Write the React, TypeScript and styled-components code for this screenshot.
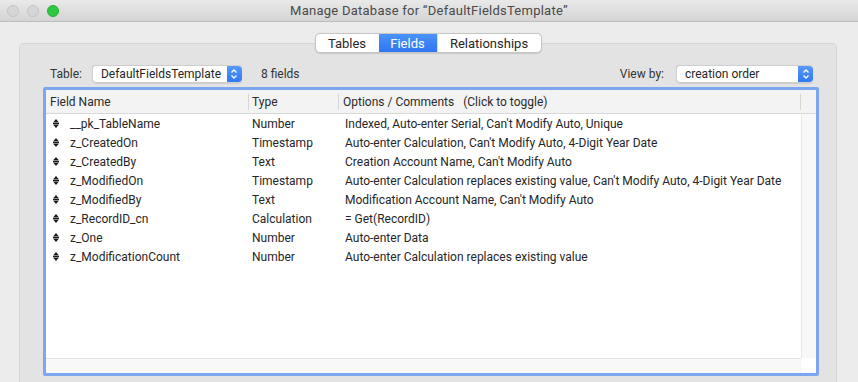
import React from "react";
import styled, { createGlobalStyle } from "styled-components";

const Global = createGlobalStyle`
  html, body { margin: 0; padding: 0; }
  body { background: #ececec; font-family: Roboto, "Liberation Sans", sans-serif; -webkit-font-smoothing: antialiased; }
  * { box-sizing: border-box; }
`;

const Window = styled.div`
  width: 858px;
  height: 382px;
  background: #ececec;
  display: flex;
  flex-direction: column;
  overflow: hidden;
`;

const TitleBar = styled.div`
  height: 22px;
  flex: none;
  background: linear-gradient(#e9e9e9, #d4d4d4);
  border-bottom: 1px solid #bcbcbc;
  display: flex;
  align-items: center;
  position: relative;
`;

const Lights = styled.div`
  display: flex;
  gap: 8px;
  padding-left: 7px;
`;

const Light = styled.span<{ $color: string; $border: string }>`
  width: 12px;
  height: 12px;
  border-radius: 50%;
  background: ${(p) => p.$color};
  border: 1px solid ${(p) => p.$border};
`;

const Title = styled.div`
  position: absolute;
  left: 0;
  right: 0;
  text-align: center;
  font-size: 13px;
  letter-spacing: 0.25px;
  color: #4a4a4a;
  pointer-events: none;
`;

const Body = styled.div`
  flex: 1;
  padding: 11px 21px 0 19px;
  display: flex;
  flex-direction: column;
`;

const TabsRow = styled.div`
  display: flex;
  justify-content: center;
  height: 20px;
  margin-bottom: -10px;
  position: relative;
  z-index: 1;
`;

const Segmented = styled.div`
  display: flex;
  background: #fff;
  border: 1px solid #c6c6c6;
  border-radius: 5px;
  overflow: hidden;
  box-shadow: 0 0.5px 1px rgba(0,0,0,0.12);
`;

const Segment = styled.div<{ $w: number; $active?: boolean }>`
  width: ${(p) => p.$w}px;
  display: flex;
  align-items: center;
  justify-content: center;
  font-size: 13px;
  color: ${(p) => (p.$active ? "#fff" : "#262626")};
  background: ${(p) => (p.$active ? "linear-gradient(#4b92f8, #2f76f3)" : "transparent")};
  border-left: ${(p) => (p.$active ? "none" : "1px solid #dcdcdc")};
  &:first-child { border-left: none; }
`;

const Group = styled.div`
  flex: 1;
  background: #e3e3e3;
  border: 1px solid #d6d6d6;
  border-bottom: none;
  border-radius: 5px 5px 0 0;
  padding: 21px 17px 0 23px;
  display: flex;
  flex-direction: column;
`;

const Toolbar = styled.div`
  display: flex;
  align-items: center;
  height: 18px;
  margin-bottom: 4px;
`;

const Label = styled.span<{ $ml?: number }>`
  font-size: 12px;
  color: #333;
  margin-left: ${(p) => p.$ml ?? 0}px;
`;

const Popup = styled.div<{ $w: number; $ml: number }>`
  width: ${(p) => p.$w}px;
  height: 18px;
  margin-left: ${(p) => p.$ml}px;
  background: #fff;
  border: 1px solid #cfcfcf;
  border-right: none;
  border-radius: 4px;
  display: flex;
  align-items: center;
  overflow: hidden;
  box-shadow: 0 0.5px 1px rgba(0,0,0,0.1);
`;

const PopupText = styled.span`
  flex: 1;
  font-size: 12px;
  color: #262626;
  padding-left: 8px;
  white-space: nowrap;
`;

const PopupArrow = styled.span`
  width: 15px;
  height: 18px;
  background: linear-gradient(#5a9cf9, #2f76f3);
  display: flex;
  align-items: center;
  justify-content: center;
  border-radius: 0 4px 4px 0;
`;

const Spacer = styled.div<{ $w?: number }>`
  flex: ${(p) => (p.$w ? "none" : "1")};
  width: ${(p) => (p.$w ? `${p.$w}px` : "auto")};
`;

const ListFrame = styled.div`
  height: 289px;
  border: 3px solid #7ea5ef;
  border-radius: 2px;
  background: #fff;
  display: grid;
  grid-template-columns: 1fr 15px;
  grid-template-rows: 1fr 15px;
`;

const ListMain = styled.div`
  display: flex;
  flex-direction: column;
  overflow: hidden;
`;

const Header = styled.div`
  height: 24px;
  flex: none;
  background: #f3f3f3;
  border-bottom: 1px solid #d9d9d9;
  display: grid;
  grid-template-columns: 202px 90px 462px 1fr;
  align-items: center;
`;

const HeadCell = styled.div<{ $pad: number; $divider?: boolean }>`
  font-size: 12px;
  color: #2b2b2b;
  padding-left: ${(p) => p.$pad}px;
  height: 16px;
  line-height: 17px;
  border-left: ${(p) => (p.$divider ? "1px solid #d6d6d6" : "none")};
  white-space: pre;
`;

const Row = styled.div`
  height: 19px;
  flex: none;
  display: grid;
  grid-template-columns: 202px 90px 1fr;
  align-items: center;
  font-size: 12px;
  color: #262626;
  white-space: nowrap;
`;

const NameCell = styled.div`
  display: flex;
  align-items: center;
  padding-left: 7px;
`;

const Handle = styled.span`
  width: 17px;
  display: flex;
  align-items: center;
`;

const Cell = styled.div<{ $pad: number }>`
  padding-left: ${(p) => p.$pad}px;
`;

const VScrollWrap = styled.div`
  display: flex;
  flex-direction: column;
  background: #f8f8f8;
`;

const VScrollTop = styled.div`
  height: 24px;
  background: #f3f3f3;
  border-bottom: 1px solid #d9d9d9;
`;

const VScroll = styled.div`
  flex: 1;
  background: #f8f8f8;
  border-left: 1px solid #e6e6e6;
`;

const HScroll = styled.div`
  background: #f8f8f8;
  border-top: 1px solid #e3e3e3;
`;

const Corner = styled.div`
  background: #fff;
`;

const Chevrons = () => (
  <svg width="8" height="12" viewBox="0 0 8 12">
    <path d="M1.5 4.5 L4 2 L6.5 4.5" stroke="#fff" strokeWidth="1.3" fill="none" />
    <path d="M1.5 7.5 L4 10 L6.5 7.5" stroke="#fff" strokeWidth="1.3" fill="none" />
  </svg>
);

const RowHandle = () => (
  <svg width="6" height="9" viewBox="0 0 6 9">
    <path d="M0 3.5 L3 0 L6 3.5 Z" fill="#1a1a1a" />
    <rect x="0" y="4" width="6" height="1" fill="#1a1a1a" />
    <path d="M0 5.5 L3 9 L6 5.5 Z" fill="#1a1a1a" />
  </svg>
);

const fields: [string, string, string][] = [
  ["__pk_TableName", "Number", "Indexed, Auto-enter Serial, Can't Modify Auto, Unique"],
  ["z_CreatedOn", "Timestamp", "Auto-enter Calculation, Can't Modify Auto, 4-Digit Year Date"],
  ["z_CreatedBy", "Text", "Creation Account Name, Can't Modify Auto"],
  ["z_ModifiedOn", "Timestamp", "Auto-enter Calculation replaces existing value, Can't Modify Auto, 4-Digit Year Date"],
  ["z_ModifiedBy", "Text", "Modification Account Name, Can't Modify Auto"],
  ["z_RecordID_cn", "Calculation", "= Get(RecordID)"],
  ["z_One", "Number", "Auto-enter Data"],
  ["z_ModificationCount", "Number", "Auto-enter Calculation replaces existing value"],
];

export default function App() {
  return (
    <>
      <Global />
      <Window>
        <TitleBar>
          <Lights>
            <Light $color="#d6d6d6" $border="#c4c4c4" />
            <Light $color="#d6d6d6" $border="#c4c4c4" />
            <Light $color="#2dc83e" $border="#25b034" />
          </Lights>
          <Title>Manage Database for “DefaultFieldsTemplate”</Title>
        </TitleBar>
        <Body>
          <TabsRow>
            <Segmented>
              <Segment $w={63}>Tables</Segment>
              <Segment $w={58} $active>Fields</Segment>
              <Segment $w={104}>Relationships</Segment>
            </Segmented>
          </TabsRow>
          <Group>
            <Toolbar>
              <Label $ml={7}>Table:</Label>
              <Popup $w={150} $ml={10}>
                <PopupText>DefaultFieldsTemplate</PopupText>
                <PopupArrow><Chevrons /></PopupArrow>
              </Popup>
              <Label $ml={19}>8 fields</Label>
              <Spacer />
              <Label>View by:</Label>
              <Popup $w={137} $ml={12}>
                <PopupText>creation order</PopupText>
                <PopupArrow><Chevrons /></PopupArrow>
              </Popup>
              <Spacer $w={6} />
            </Toolbar>
            <ListFrame>
              <ListMain>
                <Header>
                  <HeadCell $pad={4}>Field Name</HeadCell>
                  <HeadCell $pad={3} $divider>Type</HeadCell>
                  <HeadCell $pad={4} $divider>{"Options / Comments   (Click to toggle)"}</HeadCell>
                  <HeadCell $pad={0} $divider />
                </Header>
                {fields.map(([name, type, opts]) => (
                  <Row key={name}>
                    <NameCell>
                      <Handle><RowHandle /></Handle>
                      {name}
                    </NameCell>
                    <Cell $pad={4}>{type}</Cell>
                    <Cell $pad={7}>{opts}</Cell>
                  </Row>
                ))}
              </ListMain>
              <VScrollWrap>
                <VScrollTop />
                <VScroll />
              </VScrollWrap>
              <HScroll />
              <Corner />
            </ListFrame>
          </Group>
        </Body>
      </Window>
    </>
  );
}
